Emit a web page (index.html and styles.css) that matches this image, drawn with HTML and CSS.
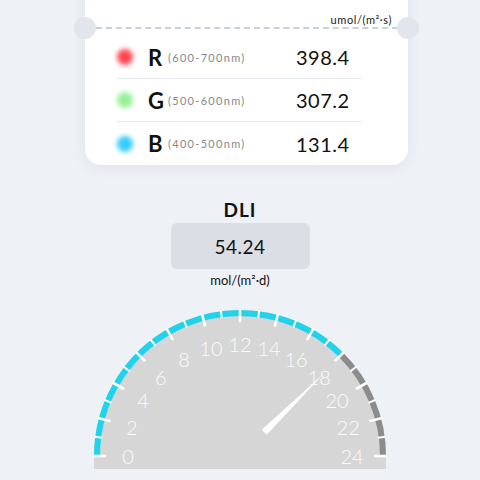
FILE: index.html
```html
<!DOCTYPE html>
<html lang="en">
<head>
    <meta charset="UTF-8">
    <meta name="viewport" content="width=device-width, initial-scale=1.0">
    <title>Light Meter</title>
    <link rel="stylesheet" href="styles.css">
</head>
<body>
    <div class="card">
        <div class="card-head">
            <span class="unit">umol/(m²·s)</span>
        </div>
        <div class="rows">
            <div class="row">
                <span class="dot red"></span>
                <span class="band">R</span>
                <span class="range">(600-700nm)</span>
                <span class="value">398.4</span>
            </div>
            <div class="row">
                <span class="dot green"></span>
                <span class="band">G</span>
                <span class="range">(500-600nm)</span>
                <span class="value">307.2</span>
            </div>
            <div class="row">
                <span class="dot blue"></span>
                <span class="band">B</span>
                <span class="range">(400-500nm)</span>
                <span class="value">131.4</span>
            </div>
        </div>
    </div>

    <div class="dli">
        <h2>DLI</h2>
        <div class="dli-box">54.24</div>
        <div class="dli-unit">mol/(m²·d)</div>
    </div>

    <svg class="gauge" id="gauge" width="300" height="165" viewBox="0 0 300 165"></svg>

    <script>
        var svg = document.getElementById('gauge');
        var cx = 150, cy = 150;
        var ns = 'http://www.w3.org/2000/svg';

        function pt(r, deg) {
            var a = deg * Math.PI / 180;
            return [cx + r * Math.cos(a), cy - r * Math.sin(a)];
        }

        function add(tag, attrs, text) {
            var el = document.createElementNS(ns, tag);
            for (var k in attrs) el.setAttribute(k, attrs[k]);
            if (text !== undefined) el.textContent = text;
            svg.appendChild(el);
            return el;
        }

        // dial face
        add('path', { d: 'M 4 150 A 146 146 0 0 1 296 150 Z', fill: '#d6d6d6' });
        add('rect', { x: 4, y: 149, width: 292, height: 14, fill: '#d6d6d6' });

        // coloured ring, cyan up to 18
        var split = pt(143, 45);
        add('path', { d: 'M 7 150 A 143 143 0 0 1 ' + split[0] + ' ' + split[1], fill: 'none', stroke: '#1fd3ec', 'stroke-width': 6 });
        add('path', { d: 'M ' + split[0] + ' ' + split[1] + ' A 143 143 0 0 1 293 150', fill: 'none', stroke: '#8c8c8c', 'stroke-width': 6 });

        // ticks and numbers
        for (var i = 0; i <= 24; i++) {
            var deg = 180 - i * 7.5;
            var major = i % 2 === 0;
            var a = pt(major ? 134 : 139, deg);
            var b = pt(147, deg);
            add('line', { x1: a[0], y1: a[1], x2: b[0], y2: b[1], stroke: '#fff', 'stroke-width': major ? 2.6 : 2 });
            if (major) {
                var t = pt(112, deg);
                add('text', { x: t[0], y: t[1], class: 'num' }, i);
            }
        }

        // needle
        var nd = 44.5;
        var tip = pt(118, nd);
        var b1 = pt(34, nd);
        var off = [3.5 * Math.sin(nd * Math.PI / 180), 3.5 * Math.cos(nd * Math.PI / 180)];
        add('polygon', {
            points: (b1[0] - off[0]) + ',' + (b1[1] - off[1]) + ' ' + (b1[0] + off[0]) + ',' + (b1[1] + off[1]) + ' ' + tip[0] + ',' + tip[1],
            fill: '#fff'
        });
    </script>
</body>
</html>
```

FILE: styles.css
```css
body { margin: 0; background: #eef1f6; font-family: Lato, "DejaVu Sans", sans-serif; color: #111; }

.card { position: relative; width: 323px; margin: -30px 0 0 85px; background: #fff; border-radius: 16px; box-shadow: 0 3px 14px rgba(60, 70, 90, 0.08); }
.card::before, .card::after { content: ""; position: absolute; top: 47px; width: 22px; height: 22px; border-radius: 50%; background: #e2e6ec; }
.card::before { left: -11px; }
.card::after { right: -11px; }

.card-head { height: 57px; margin: 0 10px 0 11px; border-bottom: 2px dashed #c8d0da; display: flex; align-items: flex-end; justify-content: flex-end; }
.unit { font-size: 11px; line-height: 12px; margin-right: 6px; margin-bottom: 1px; letter-spacing: 0.6px; color: #222; }

.rows { margin-left: 32px; width: 245px; padding-top: 7px; }
.row { display: flex; align-items: center; height: 42px; border-bottom: 1px solid #e7e9ee; }
.row:last-child { border-bottom: none; height: 43px; }

.dot { width: 16px; height: 16px; border-radius: 50%; margin: 0 15px 0 0; filter: blur(2.5px); }
.red { background: #ff4650; }
.green { background: #98f098; }
.blue { background: #36ccfd; }

.band { font-size: 22px; font-weight: bold; width: 20px; }
.range { font-size: 11px; color: #888; letter-spacing: 1.3px; width: 128px; }
.value { font-size: 20px; letter-spacing: 0.5px; }

.dli { display: flex; flex-direction: column; align-items: center; margin-top: 34px; }
.dli h2 { margin: 0; font-size: 19px; line-height: 22px; letter-spacing: 1px; }
.dli-box { margin-top: 2px; width: 139px; height: 46px; display: flex; align-items: center; justify-content: center; background: #dcdee5; border-radius: 6px; font-size: 19px; letter-spacing: 0.5px; }
.dli-unit { margin-top: 3px; font-size: 13px; line-height: 16px; }

.gauge { display: block; margin: 18px auto 0; }
.num { fill: #fbfbfb; font-family: Lato, sans-serif; font-weight: 300; font-size: 20px; text-anchor: middle; dominant-baseline: central; }
```
